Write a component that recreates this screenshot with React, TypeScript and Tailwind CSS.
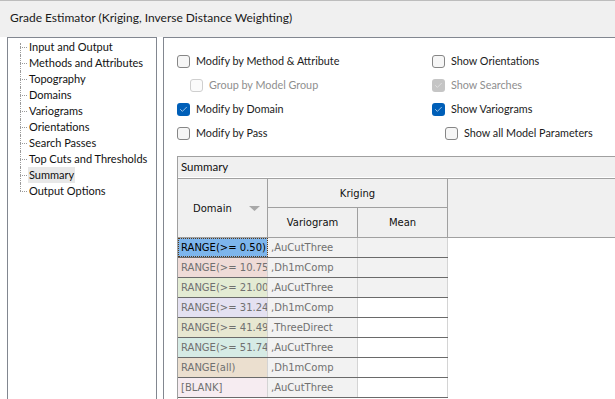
import { Check } from "lucide-react";

const FONT = "font-['Lato','Noto_Sans',sans-serif]";
const CELL = "font-['DejaVu_Sans','Liberation_Sans',sans-serif] text-[10px]";

const treeItems = [
  "Input and Output",
  "Methods and Attributes",
  "Topography",
  "Domains",
  "Variograms",
  "Orientations",
  "Search Passes",
  "Top Cuts and Thresholds",
  "Summary",
  "Output Options",
];

const rows = [
  { domain: "RANGE(>= 0.50)", vario: ",AuCutThree", bg: "bg-[#7db5ec]", selected: true, meanGray: true },
  { domain: "RANGE(>= 10.75", vario: ",Dh1mComp", bg: "bg-[#efdbd7]", meanGray: true },
  { domain: "RANGE(>= 21.00", vario: ",AuCutThree", bg: "bg-[#e3ebd3]", meanGray: true },
  { domain: "RANGE(>= 31.24", vario: ",Dh1mComp", bg: "bg-[#e4e1f1]" },
  { domain: "RANGE(>= 41.49", vario: ",ThreeDirect", bg: "bg-[#e7e7d1]" },
  { domain: "RANGE(>= 51.74", vario: ",AuCutThree", bg: "bg-[#d6ebe5]" },
  { domain: "RANGE(all)", vario: ",Dh1mComp", bg: "bg-[#ebdfcf]" },
  { domain: "[BLANK]", vario: ",AuCutThree", bg: "bg-[#f6ecf1]" },
];

function Box({ checked, disabled }: { checked?: boolean; disabled?: boolean }) {
  if (checked) {
    return (
      <span
        className={`w-[13px] h-[13px] rounded-[3px] flex items-center justify-center shrink-0 ${
          disabled ? "bg-[#c5c5c5]" : "bg-[#005fb8]"
        }`}
      >
        <Check size={9} strokeWidth={2} color={disabled ? "#e6e6e6" : "#cfe3f7"} />
      </span>
    );
  }
  return (
    <span
      className={`w-[13px] h-[13px] rounded-[3px] border shrink-0 ${
        disabled ? "border-[#cfcfcf] bg-[#fbfbfb]" : "border-[#868686] bg-[#f6f6f6]"
      }`}
    />
  );
}

function Option({
  label,
  checked,
  disabled,
  indent,
}: {
  label: string;
  checked?: boolean;
  disabled?: boolean;
  indent?: boolean;
}) {
  return (
    <div className={`flex items-center h-[24px] gap-[6px] whitespace-nowrap ${indent ? "pl-[13px]" : ""}`}>
      <Box checked={checked} disabled={disabled} />
      <span className={`text-[10.8px] ${disabled ? "text-[#8e8e8e]" : "text-[#1b1b1b]"}`}>{label}</span>
    </div>
  );
}

export default function App() {
  return (
    <div className={`w-[615px] h-[399px] overflow-hidden bg-white flex flex-col ${FONT}`}>
      {/* title */}
      <div className="h-[37px] shrink-0 bg-[#f0f0f0] border-t border-[#bdbdbd] flex items-center pl-[10px] pb-[3px]">
        <span className="text-[12px] text-[#1a1a1a] whitespace-nowrap">
          Grade Estimator (Kriging, Inverse Distance Weighting)
        </span>
      </div>

      <div className="flex flex-1 min-h-0">
        {/* tree */}
        <div className="ml-[7px] w-[150px] shrink-0 border-l border-t border-r border-[#828790] pt-[1px] pl-[12px]">
          {treeItems.map((t, i) => {
            const last = i === treeItems.length - 1;
            return (
              <div key={t} className="flex items-center h-[16px] whitespace-nowrap">
                <div className="relative w-[8px] h-full shrink-0">
                  <div
                    className={`absolute left-0 border-l border-dotted border-[#9a9a9a] ${
                      i === 0 ? "top-[4px] h-[12px]" : last ? "top-0 h-[8px]" : "top-0 h-full"
                    }`}
                  />
                  <div className="absolute left-0 top-[8px] w-[7px] border-t border-dotted border-[#9a9a9a]" />
                </div>
                <span
                  className={`text-[11px] text-[#111] leading-[16px] px-[1px] ${
                    t === "Summary" ? "bg-[#e8e8e8]" : ""
                  }`}
                >
                  {t}
                </span>
              </div>
            );
          })}
        </div>

        {/* right panel */}
        <div className="ml-[6px] flex-1 border-l border-t border-[#828790] flex flex-col">
          <div className="flex pt-[11px] pl-[13px]">
            <div className="w-[255px]">
              <Option label="Modify by Method & Attribute" />
              <Option label="Group by Model Group" disabled indent />
              <Option label="Modify by Domain" checked />
              <Option label="Modify by Pass" />
            </div>
            <div>
              <Option label="Show Orientations" />
              <Option label="Show Searches" checked disabled />
              <Option label="Show Variograms" checked />
              <Option label="Show all Model Parameters" indent />
            </div>
          </div>

          {/* summary grid */}
          <div className="mt-[11px] ml-[13px] flex-1 border-l border-t border-[#a0a0a0] flex flex-col">
            <div className="h-[21px] bg-[#f0f0f0] border-b border-white flex items-center pl-[3px]">
              <span className="text-[11.5px] text-[#111]">Summary</span>
            </div>
            <div className="flex h-[60px] bg-[#f0f0f0] border-t border-b border-[#a0a0a0]">
              <div className="w-[90px] border-r border-[#a0a0a0] flex items-center pl-[15px]">
                <span className={`${CELL} text-[#111]`}>Domain</span>
                <svg width="11" height="6" className="ml-[17px] mt-[2px]">
                  <polygon points="0,0 11,0 5.5,5" fill="#a8a8a8" />
                </svg>
              </div>
              <div className="w-[180px] border-r border-[#a0a0a0] flex flex-col">
                <div className="h-[29px] border-b border-[#a0a0a0] flex items-center justify-center">
                  <span className={`${CELL} text-[#111]`}>Kriging</span>
                </div>
                <div className="flex flex-1">
                  <div className="w-[90px] border-r border-[#a0a0a0] flex items-center justify-center">
                    <span className={`${CELL} text-[#111]`}>Variogram</span>
                  </div>
                  <div className="flex-1 flex items-center justify-center">
                    <span className={`${CELL} text-[#111]`}>Mean</span>
                  </div>
                </div>
              </div>
              <div className="flex-1" />
            </div>
            {rows.map((r) => (
              <div key={r.domain} className="flex h-[20px] w-[270px] border-b border-[#6a6a6a]">
                <div
                  className={`w-[90px] border-r border-[#d4d4d4] ${r.bg} flex items-center overflow-hidden whitespace-nowrap pl-[3px] ${
                    r.selected
                      ? "outline outline-1 outline-dotted outline-[#5a3a1a] -outline-offset-1 text-black"
                      : "text-[#707070]"
                  }`}
                >
                  <span className={CELL}>{r.domain}</span>
                </div>
                <div className="w-[90px] border-r border-[#d4d4d4] bg-[#f2f2f2] flex items-center pl-[3px]">
                  <span className={`w-[63px] overflow-hidden whitespace-nowrap text-[#707070] ${CELL}`}>
                    {r.vario}
                  </span>
                </div>
                <div className={`w-[90px] border-r border-[#d4d4d4] ${r.meanGray ? "bg-[#f2f2f2]" : "bg-white"}`} />
              </div>
            ))}
          </div>
        </div>
      </div>
    </div>
  );
}
